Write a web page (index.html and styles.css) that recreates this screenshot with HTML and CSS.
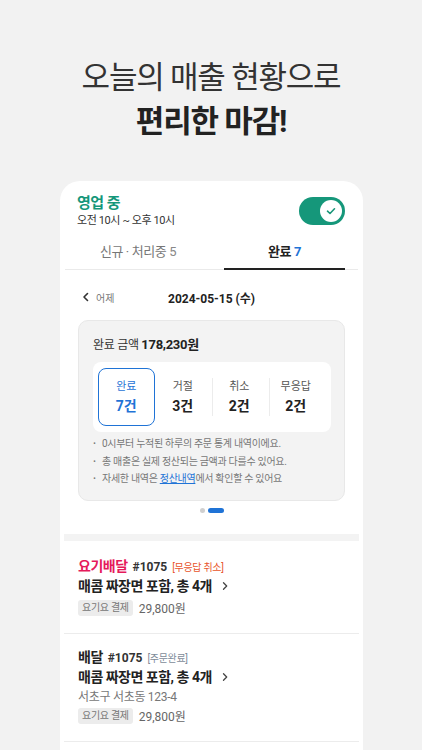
FILE: index.html
```html
<!DOCTYPE html>
<html lang="ko">
<head>
    <meta charset="UTF-8">
    <meta name="viewport" content="width=device-width, initial-scale=1.0">
    <title>오늘의 매출 현황</title>
    <link rel="stylesheet" href="styles.css">
</head>
<body>
    <header class="promo">
        <p class="promo-line">오늘의 매출 현황으로</p>
        <p class="promo-line promo-strong">편리한 마감!</p>
    </header>

    <div class="phone">
        <div class="status">
            <div>
                <div class="status-title">영업 중</div>
                <div class="status-hours">오전 10시 ~ 오후 10시</div>
            </div>
            <div class="toggle">
                <span class="knob">
                    <svg width="12" height="12" viewBox="0 0 12 12"><path d="M2.5 6.2 L5 8.5 L9.5 3.8" fill="none" stroke="#1a9679" stroke-width="1.6" stroke-linecap="round" stroke-linejoin="round"/></svg>
                </span>
            </div>
        </div>

        <div class="tabs">
            <div class="tab">신규 · 처리중 <span class="tab-count">5</span></div>
            <div class="tab active">완료 <span class="tab-count">7</span></div>
        </div>

        <div class="date-row">
            <div class="prev">
                <svg width="10" height="10" viewBox="0 0 10 10"><path d="M6.5 1.5 L3 5 L6.5 8.5" fill="none" stroke="#333" stroke-width="1.6" stroke-linecap="round" stroke-linejoin="round"/></svg>
                <span>어제</span>
            </div>
            <div class="date">2024-05-15 (수)</div>
        </div>

        <div class="summary">
            <div class="summary-total">완료 금액 <strong>178,230원</strong></div>
            <div class="counts">
                <div class="count selected"><span class="count-label">완료</span><span class="count-value">7건</span></div>
                <div class="count"><span class="count-label">거절</span><span class="count-value">3건</span></div>
                <div class="count divided"><span class="count-label">취소</span><span class="count-value">2건</span></div>
                <div class="count divided"><span class="count-label">무응답</span><span class="count-value">2건</span></div>
            </div>
            <ul class="notes">
                <li>0시부터 누적된 하루의 주문 통계 내역이에요.</li>
                <li>총 매출은 실제 정산되는 금액과 다를수 있어요.</li>
                <li>자세한 내역은 <a href="#">정산내역</a>에서 확인할 수 있어요</li>
            </ul>
        </div>

        <div class="dots"><span class="dot"></span><span class="dot current"></span></div>

        <div class="band"></div>

        <div class="order">
            <div class="order-head">
                <span class="order-type yogi">요기배달</span>
                <span class="order-no">#1075</span>
                <span class="order-state cancel">[무응답 취소]</span>
            </div>
            <div class="order-menu">매콤 짜장면 포함, 총 4개
                <svg width="10" height="10" viewBox="0 0 10 10"><path d="M3.5 1.8 L6.7 5 L3.5 8.2" fill="none" stroke="#444" stroke-width="1.3" stroke-linecap="round" stroke-linejoin="round"/></svg>
            </div>
            <div class="order-pay"><span class="pay-badge">요기요 결제</span><span class="price">29,800원</span></div>
        </div>

        <div class="order">
            <div class="order-head">
                <span class="order-type">배달</span>
                <span class="order-no">#1075</span>
                <span class="order-state done">[주문완료]</span>
            </div>
            <div class="order-menu">매콤 짜장면 포함, 총 4개
                <svg width="10" height="10" viewBox="0 0 10 10"><path d="M3.5 1.8 L6.7 5 L3.5 8.2" fill="none" stroke="#444" stroke-width="1.3" stroke-linecap="round" stroke-linejoin="round"/></svg>
            </div>
            <div class="order-addr">서초구 서초동 123-4</div>
            <div class="order-pay"><span class="pay-badge">요기요 결제</span><span class="price">29,800원</span></div>
        </div>
    </div>
</body>
</html>
```

FILE: styles.css
```css
body {
    margin: 0;
    background: #f2f2f2;
    font-family: Roboto, "Noto Sans CJK KR", sans-serif;
    color: #222;
    overflow: hidden;
}
.promo {
    padding-top: 56px;
    text-align: center;
}
.promo-line {
    margin: 0;
    font-size: 31px;
    line-height: 44px;
    color: #333;
    letter-spacing: -1.2px;
}
.promo-strong {
    font-weight: 700;
    color: #222;
}
.phone {
    margin: 37px 0 0 60px;
    width: 303px;
    height: 600px;
    background: #fff;
    border-radius: 20px 20px 0 0;
}
.status {
    display: flex;
    justify-content: space-between;
    align-items: center;
    padding: 12px 18px 0 17px;
}
.status-title {
    font-size: 15px;
    font-weight: 700;
    color: #15977a;
    line-height: 20px;
    letter-spacing: -0.5px;
}
.status-hours {
    font-size: 11px;
    line-height: 16px;
    color: #333;
    letter-spacing: -0.4px;
}
.toggle {
    position: relative;
    width: 46px;
    height: 28px;
    border-radius: 14px;
    background: #15977a;
}
.knob {
    position: absolute;
    right: 3px;
    top: 3px;
    width: 22px;
    height: 22px;
    border-radius: 50%;
    background: #fff;
    display: flex;
    align-items: center;
    justify-content: center;
}
.tabs {
    display: grid;
    grid-template-columns: 146px 1fr;
    margin: 6px 5px 0;
    border-bottom: 1px solid #eaeaea;
}
.tab {
    position: relative;
    text-align: center;
    font-size: 13px;
    line-height: 34px;
    color: #777;
    letter-spacing: -0.4px;
}
.tab.active {
    font-weight: 700;
    color: #222;
}
.tab.active::after {
    content: "";
    position: absolute;
    left: 13px;
    right: 13px;
    bottom: -1px;
    height: 2px;
    background: #222;
}
.tab .tab-count {
    color: #888;
}
.tab.active .tab-count {
    color: #1f73d6;
}
.date-row {
    position: relative;
    display: flex;
    justify-content: center;
    align-items: center;
    height: 16px;
    margin: 19px 18px 0;
}
.prev {
    position: absolute;
    left: 3px;
    display: flex;
    align-items: center;
    gap: 5px;
    font-size: 10px;
    color: #777;
}
.date {
    font-size: 12px;
    font-weight: 700;
    color: #222;
}
.summary {
    margin: 15px 18px 0;
    padding: 16px 13px 12px 14px;
    background: #f3f3f3;
    border: 1px solid #e8e8e8;
    border-radius: 10px;
}
.summary-total {
    font-size: 12px;
    line-height: 16px;
    color: #333;
    letter-spacing: -0.3px;
}
.summary-total strong {
    font-size: 13px;
    color: #222;
}
.counts {
    display: flex;
    margin-top: 9px;
    padding: 6px 7px 6px 5px;
    background: #fff;
    border-radius: 8px;
}
.count {
    flex: 1;
    display: flex;
    flex-direction: column;
    align-items: center;
    justify-content: center;
    height: 56px;
    position: relative;
    border: 1px solid transparent;
    border-radius: 8px;
}
.count.selected {
    border-color: #1f73d6;
}
.count.divided::before {
    content: "";
    position: absolute;
    left: 0;
    top: 9px;
    bottom: 9px;
    width: 1px;
    background: #ececec;
}
.count-label {
    font-size: 11px;
    line-height: 18px;
    color: #555;
}
.count-value {
    font-size: 14px;
    line-height: 20px;
    font-weight: 700;
    color: #222;
}
.count.selected .count-label,
.count.selected .count-value {
    color: #1f73d6;
}
.notes {
    list-style: none;
    margin: 3px 0 0;
    padding: 0;
    font-size: 10px;
    line-height: 17.5px;
    color: #777;
    letter-spacing: -0.3px;
}
.notes li::before {
    content: "·";
    display: inline-block;
    width: 9px;
    font-weight: 700;
}
.notes a {
    color: #1f73d6;
    text-decoration: underline;
}
.dots {
    display: flex;
    justify-content: center;
    gap: 3px;
    margin-top: 7px;
}
.dot {
    width: 5px;
    height: 5px;
    border-radius: 3px;
    background: #cfcfcf;
}
.dot.current {
    width: 16px;
    background: #1f73d6;
}
.band {
    height: 7px;
    margin: 21px 4px 0;
    background: #f3f3f3;
}
.order {
    padding: 15px 14px 17px;
    margin: 0 4px;
    border-bottom: 1px solid #ececec;
}
.order + .order {
    padding-top: 13px;
}
.order-head {
    display: flex;
    align-items: baseline;
    gap: 5px;
    height: 20px;
    line-height: 20px;
}
.order-type {
    font-size: 14px;
    font-weight: 700;
    color: #222;
    letter-spacing: -0.5px;
}
.order-type.yogi {
    color: #e5195b;
}
.order-no {
    font-size: 12px;
    font-weight: 700;
    color: #333;
}
.order-state {
    font-size: 10px;
    letter-spacing: -0.3px;
}
.order-state.cancel {
    color: #e8542b;
}
.order-state.done {
    color: #7d8b99;
}
.order-menu {
    display: flex;
    align-items: center;
    gap: 8px;
    height: 21px;
    font-size: 14px;
    line-height: 21px;
    font-weight: 700;
    color: #222;
    letter-spacing: -0.5px;
}
.order-addr {
    font-size: 12px;
    line-height: 18px;
    color: #777;
    letter-spacing: -0.3px;
}
.order-pay {
    display: flex;
    align-items: center;
    gap: 6px;
    height: 16px;
    margin-top: 3px;
}
.order-addr + .order-pay {
    margin-top: 2px;
}
.pay-badge {
    padding: 0 4px;
    font-size: 10px;
    line-height: 16px;
    color: #777;
    background: #ececec;
    border-radius: 3px;
    letter-spacing: -0.3px;
}
.price {
    font-size: 12px;
    color: #666;
}
```
